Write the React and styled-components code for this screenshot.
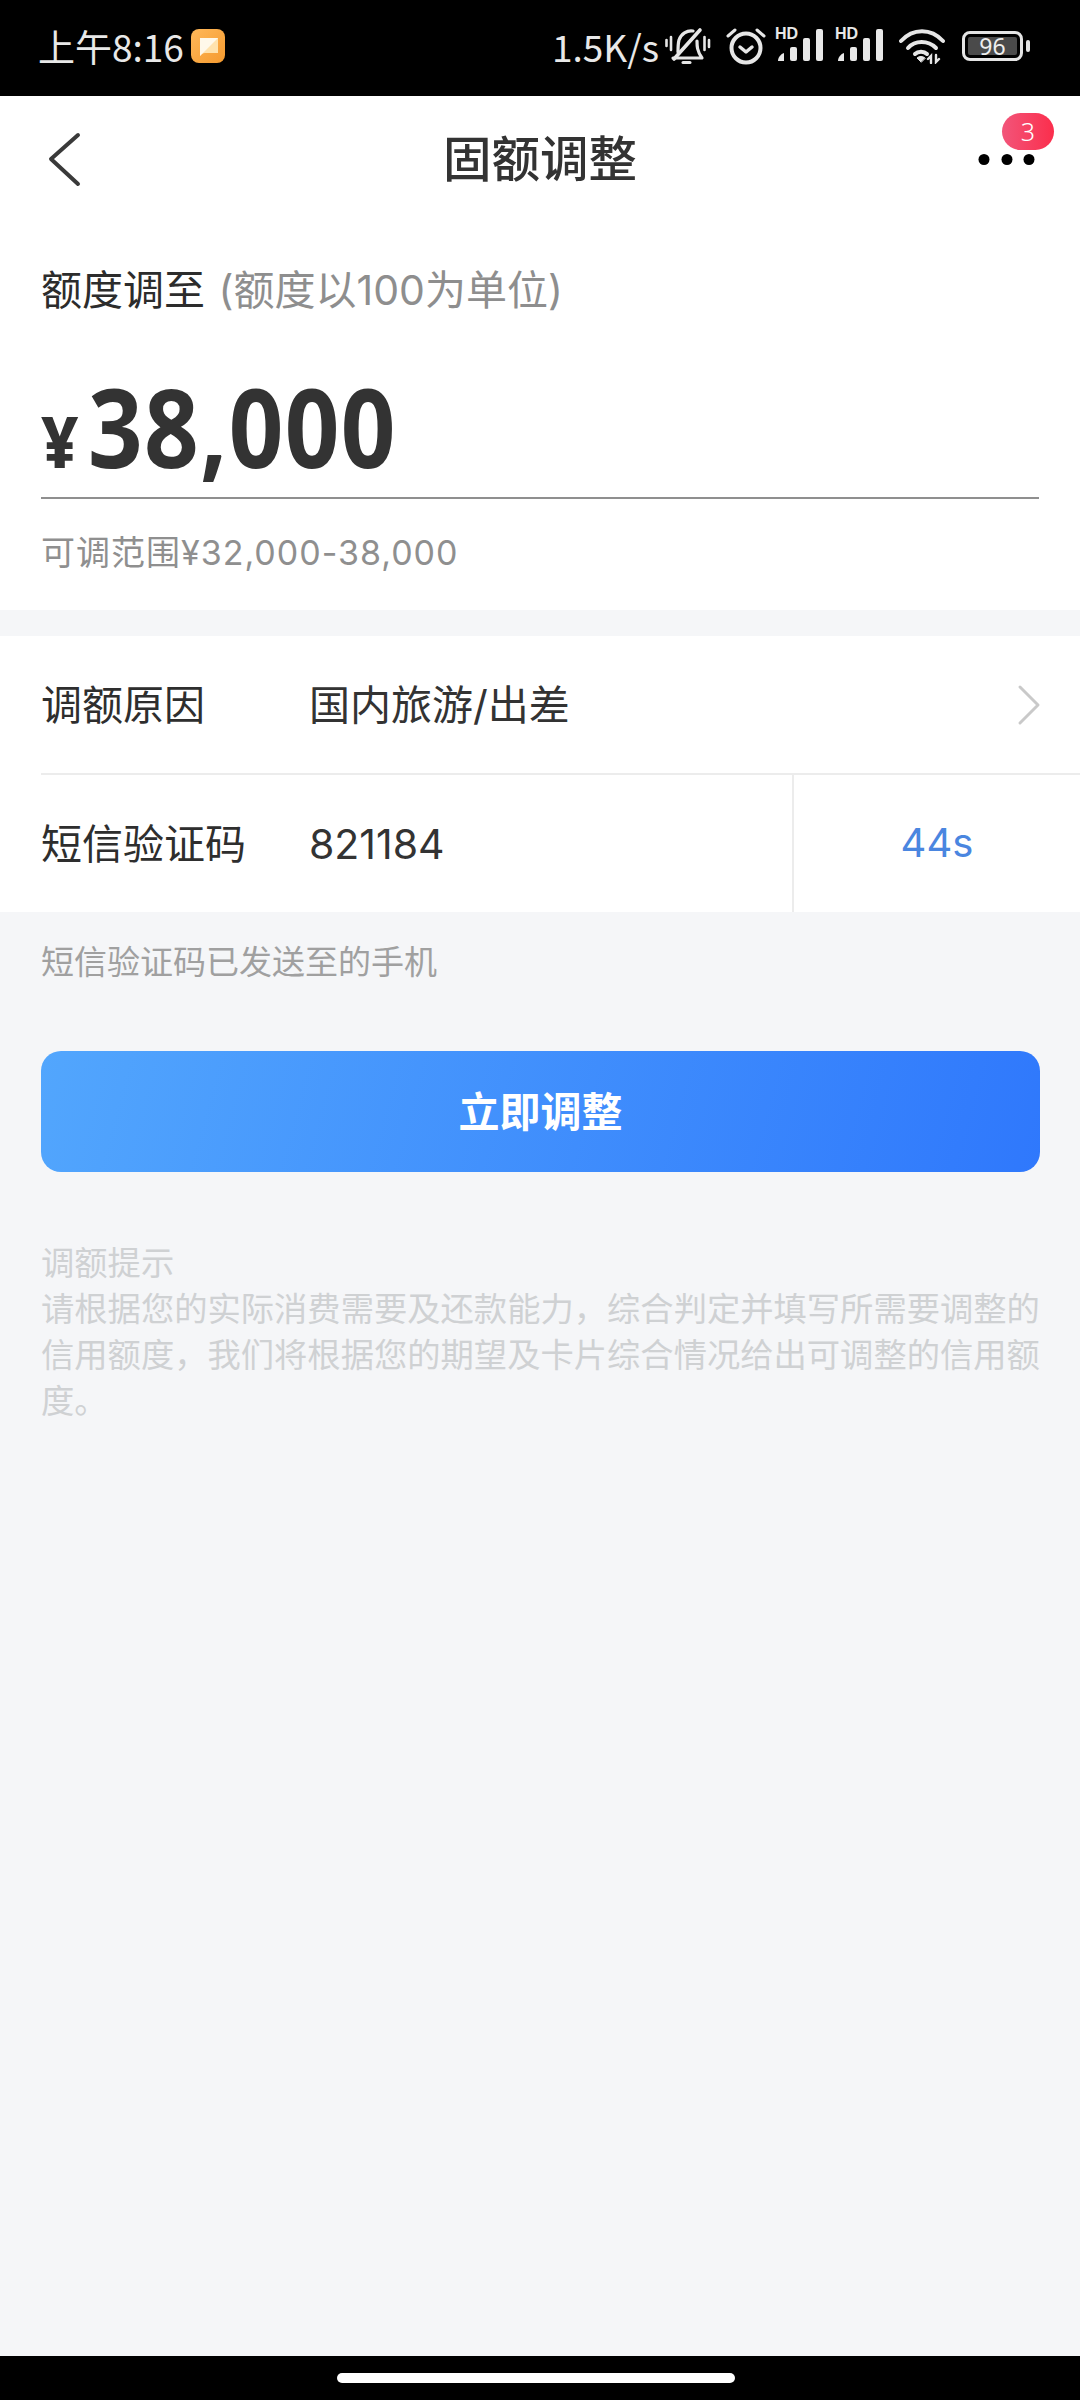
import React from "react";
import styled, { createGlobalStyle } from "styled-components";

const CJK = `Inter, "Noto Sans CJK SC", "Noto Sans", sans-serif`;
const Global = createGlobalStyle`
  html, body { margin: 0; padding: 0; background: #f5f6f8; }
  * { box-sizing: border-box; }
  body { font-family: ${CJK}; }
`;
const Page = styled.div`width:1080px;height:2400px;display:flex;flex-direction:column;background:#f5f6f8;overflow:hidden;`;
const StatusBar = styled.div`height:96px;background:#000;display:flex;align-items:center;justify-content:space-between;padding:0 50px 4px 38px;color:#e8e8e8;flex:none;`;
const StatusGroup = styled.div`display:flex;align-items:center;gap:${p=>p.$gap||0}px;`;
const StatusText = styled.span`font-size:37px;line-height:44px;font-family:"Noto Sans CJK SC",sans-serif;`;
const Speed = styled(StatusText)`margin-right:6px;`;
const BellIcon = styled.svg`margin-right:15px;`;
const AlarmIcon = styled.svg`margin-right:10px;`;
const WifiIcon = styled.svg`margin:0 17px 0 13px;`;
const Nav = styled.div`height:127px;background:#fff;position:relative;display:flex;align-items:center;justify-content:center;flex:none;padding-top:1px;`;
const Title = styled.h1`margin:0;font-size:48.5px;font-weight:500;color:#333;line-height:60px;`;
const Back = styled.svg`position:absolute;left:46px;top:34px;`;
const Dots = styled.svg`position:absolute;left:976px;top:57px;`;
const Badge = styled.span`position:absolute;left:1002px;top:17px;width:52px;height:37px;border-radius:19px;background:linear-gradient(90deg,#f2557a,#fb2e4c);color:#fff;font-size:25px;line-height:37px;text-align:center;font-weight:300;font-family:"Noto Sans",sans-serif;`;
const AmountCard = styled.section`background:#fff;height:387px;padding:42px 41px 0;flex:none;`;
const Label = styled.div`font-size:41px;line-height:50px;color:#2c2c2c;white-space:nowrap;`;
const Hint = styled.span`color:#8e8e8e;margin-left:2px;`;
const AmountRow = styled.div`height:184px;border-bottom:2px solid #8f8f8f;padding-bottom:17px;display:flex;align-items:flex-end;`;
const Yen = styled.span`display:inline-block;width:47px;font-size:72px;font-weight:800;color:#333;line-height:72px;margin-bottom:4px;transform:scaleX(.9);transform-origin:left bottom;font-family:"Noto Sans",sans-serif;`;
const Amount = styled.span`display:inline-block;font-size:110px;font-weight:700;color:#333;line-height:110px;letter-spacing:1.5px;transform:scaleX(.87);transform-origin:left bottom;font-family:"Noto Sans",sans-serif;`;
const Range = styled.div`font-size:34px;letter-spacing:1px;line-height:46px;color:#8f8f8f;margin-top:31px;`;
const List = styled.section`background:#fff;margin-top:26px;flex:none;`;
const Row = styled.div`height:${p=>p.$h}px;display:flex;align-items:center;padding-left:41px;`;
const RowLabel = styled.div`width:268px;font-size:41px;color:#2e2e2e;line-height:50px;flex:none;`;
const RowValue = styled.div`font-size:41px;color:#333;line-height:50px;flex:1;`;
const Chevron = styled.svg`margin-right:39px;`;
const Divider = styled.div`height:2px;background:#ececec;margin-left:41px;`;
const Timer = styled.div`width:288px;height:100%;border-left:2px solid #ececec;color:#4a86e0;font-size:40px;display:flex;align-items:center;justify-content:center;padding-bottom:2px;`;
const Note = styled.div`font-size:33px;line-height:44px;color:#a0a0a0;margin:28px 41px 0;`;
const Submit = styled.button`margin:67px 40px 0 41px;height:121px;border:0;border-radius:20px;background:linear-gradient(105deg,#52a6fd,#2f78fc);color:#fff;font-size:41px;font-weight:700;font-family:${CJK};flex:none;padding:0 0 5px;`;
const Tips = styled.div`margin:68px 39px 0 41px;font-size:33.3px;line-height:46px;color:#cfd1d3;`;
const Spacer = styled.div`flex:1;`;
const HomeBar = styled.div`height:44px;background:#000;display:flex;justify-content:center;align-items:center;flex:none;padding-right:8px;`;
const HomePill = styled.div`width:398px;height:10px;border-radius:5px;background:#fff;`;
const BatteryBox = styled.div`width:61px;height:30px;border:3px solid #e4e4e4;border-radius:8px;padding:3px;`;
const BatteryFill = styled.div`width:100%;height:100%;background:#4a4a4a;border-radius:2px;color:#eee;font-size:23px;line-height:18px;text-align:center;font-family:"Noto Sans",sans-serif;`;
const BatteryCap = styled.div`width:4px;height:12px;background:#e4e4e4;border-radius:2px;margin-left:3px;`;
const HdIcon = styled.span`position:relative;display:inline-block;width:50px;height:34px;margin-right:${p=>p.$gap||0}px;`;
const HdText = styled.span`position:absolute;left:-1px;top:-3px;font-size:16px;font-weight:700;line-height:16px;color:#e8e8e8;font-family:"Liberation Sans",sans-serif;`;
const Bars = styled.svg`position:absolute;left:0;top:0;`;

const Signal = ({ gap }) => (
  <HdIcon $gap={gap}>
    <HdText>HD</HdText>
    <Bars width="50" height="34" viewBox="0 0 50 34">
      <g fill="#e8e8e8">
        <path d="M2 32c0-4 3-7 6-8v8z"/>
        <rect x="14" y="18" width="7" height="14" rx="2"/>
        <rect x="27" y="9" width="7" height="23" rx="2"/>
        <rect x="40" y="0" width="7" height="32" rx="2"/>
      </g>
    </Bars>
  </HdIcon>
);

export default function App() {
  return (
    <Page>
      <Global />
      <StatusBar>
        <StatusGroup $gap={7}>
          <StatusText>上午8:16</StatusText>
          <svg width="34" height="34" viewBox="0 0 34 34">
            <defs>
              <linearGradient id="ng" x1="0" y1="0" x2="1" y2="1"><stop offset="0" stopColor="#ffb85a"/><stop offset="1" stopColor="#f59a2f"/></linearGradient>
            </defs>
            <rect width="34" height="34" rx="8" fill="url(#ng)"/>
            <path d="M9 9h18v15H14c-2 0-4 1-5 3z" fill="#ffe2ad"/>
            <path d="M9 9h18L9 27z" fill="#fff8ea"/>
          </svg>
        </StatusGroup>
        <StatusGroup>
          <Speed>1.5K/s</Speed>
          <BellIcon width="46" height="38" viewBox="0 0 46 38" fill="none" stroke="#e6e6e6" strokeWidth="3.2" strokeLinecap="round" strokeLinejoin="round">
            <path d="M13 25c0-4 0-8 1-12 2-6 8-10 14-9M32 14c0 5 0 10 5 17H8"/>
            <path d="M9 32L35 3" strokeWidth="3.6"/>
            <path d="M1.5 13v6M6 10v13M39.5 10v13M44 13v7" strokeWidth="2.6"/>
            <path d="M18 35.5h7" strokeWidth="3"/>
          </BellIcon>
          <AlarmIcon width="40" height="38" viewBox="0 0 40 38" fill="none" stroke="#e6e6e6" strokeLinecap="round">
            <circle cx="20" cy="21" r="14.5" strokeWidth="4"/>
            <path d="M14 20l6 5 6-5" strokeWidth="3.5" strokeLinejoin="round"/>
            <path d="M2 9l7-6M38 9l-7-6" strokeWidth="3"/>
          </AlarmIcon>
          <Signal gap={10} />
          <Signal />
          <WifiIcon width="46" height="36" viewBox="0 0 46 36" fill="none" stroke="#e6e6e6" strokeWidth="4" strokeLinecap="round">
            <path d="M2 13C14 0 32 0 44 13"/>
            <path d="M9 20c7-8 20-8 28 0"/>
            <path d="M16 26c3-3 9-3 12 0"/>
            <path d="M22 34l-4-4c2-2 6-2 8 0z" fill="#e6e6e6" strokeWidth="1"/>
            <path d="M32 35v-7l-3 3M37 27v7l3-3" strokeWidth="2.4"/>
          </WifiIcon>
          <BatteryBox><BatteryFill>96</BatteryFill></BatteryBox>
          <BatteryCap />
        </StatusGroup>
      </StatusBar>
      <Nav>
        <Back width="36" height="60" viewBox="0 0 36 60" fill="none"><path d="M32 5L5 29l27 25" stroke="#3a3a3a" strokeWidth="4" strokeLinecap="round" strokeLinejoin="round"/></Back>
        <Title>固额调整</Title>
        <Dots width="60" height="14" viewBox="0 0 60 14"><circle cx="8" cy="6.5" r="5.5" fill="#000"/><circle cx="31" cy="6.5" r="5.5" fill="#000"/><circle cx="53" cy="6.5" r="5.5" fill="#000"/></Dots>
        <Badge>3</Badge>
      </Nav>
      <AmountCard>
        <Label>额度调至<Hint> (额度以100为单位)</Hint></Label>
        <AmountRow><Yen>¥</Yen><Amount>38,000</Amount></AmountRow>
        <Range>可调范围¥32,000-38,000</Range>
      </AmountCard>
      <List>
        <Row $h={137}>
          <RowLabel>调额原因</RowLabel>
          <RowValue>国内旅游/出差</RowValue>
          <Chevron width="24" height="42" viewBox="0 0 24 42" fill="none"><path d="M3 3l18 18L3 39" stroke="#c9c9c9" strokeWidth="3" strokeLinecap="round" strokeLinejoin="round"/></Chevron>
        </Row>
        <Divider />
        <Row $h={137}>
          <RowLabel>短信验证码</RowLabel>
          <RowValue>821184</RowValue>
          <Timer>44s</Timer>
        </Row>
      </List>
      <Note>短信验证码已发送至的手机</Note>
      <Submit>立即调整</Submit>
      <Tips>调额提示<br/>请根据您的实际消费需要及还款能力，综合判定并填写所需要调整的信用额度，我们将根据您的期望及卡片综合情况给出可调整的信用额度。</Tips>
      <Spacer />
      <HomeBar><HomePill /></HomeBar>
    </Page>
  );
}
